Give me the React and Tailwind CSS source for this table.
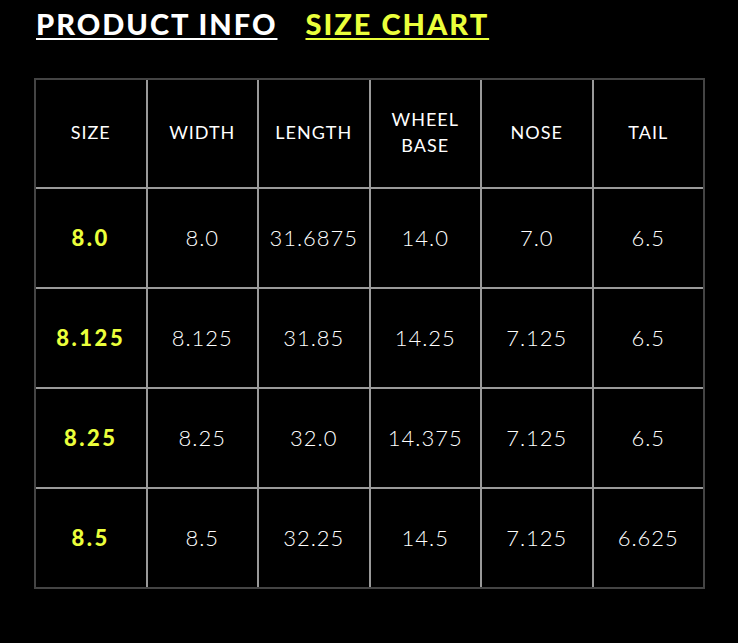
import React from "react";

const headers = [["SIZE"], ["WIDTH"], ["LENGTH"], ["WHEEL", "BASE"], ["NOSE"], ["TAIL"]];
const rows = [
  ["8.0", "8.0", "31.6875", "14.0", "7.0", "6.5"],
  ["8.125", "8.125", "31.85", "14.25", "7.125", "6.5"],
  ["8.25", "8.25", "32.0", "14.375", "7.125", "6.5"],
  ["8.5", "8.5", "32.25", "14.5", "7.125", "6.625"],
];

export default function App() {
  return (
    <div className="w-[738px] h-[643px] bg-black overflow-hidden" style={{ fontFamily: "Lato, 'Open Sans', sans-serif" }}>
      <div className="flex items-start gap-[28px] pl-[36px] pt-[6px] h-[78px]">
        <span className="text-[29px] font-black text-white tracking-[2px] underline decoration-2 underline-offset-[3px] leading-[36px]">PRODUCT INFO</span>
        <span className="text-[29px] font-black text-[#ebff3b] tracking-[2px] underline decoration-2 underline-offset-[3px] leading-[36px]">SIZE CHART</span>
      </div>
      <div className="ml-[34px] w-[671px] border-2 border-[#444]">
        <div className="grid grid-cols-6 gap-[2px] bg-[#9a9a9a]">
          {headers.map((h, i) => (
            <div key={i} className="bg-black h-[107px] pb-[3px] flex flex-col items-center justify-center text-white text-[18px] tracking-[1px] leading-[26px]">
              {h.map((l) => (
                <span key={l}>{l}</span>
              ))}
            </div>
          ))}
          {rows.map((r, ri) =>
            r.map((v, ci) => (
              <div
                key={ri + "-" + ci}
                className={
                  "bg-black h-[98px] pb-[2px] flex items-center justify-center text-[22px] " +
                  (ci === 0 ? "text-[#ebff3b] font-black tracking-[2.5px]" : "text-white font-light tracking-[1px]")
                }
              >
                {v}
              </div>
            ))
          )}
        </div>
      </div>
    </div>
  );
}
